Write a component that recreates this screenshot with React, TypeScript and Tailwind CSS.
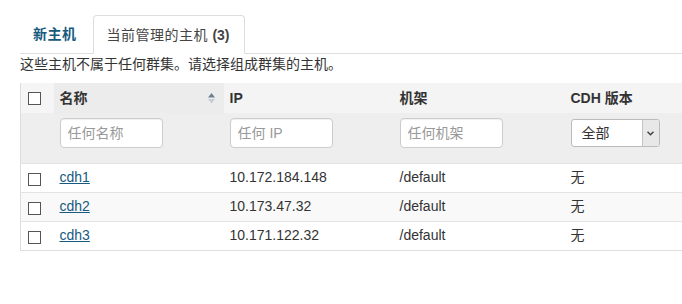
import React from "react";

const hosts = [
  { name: "cdh1", ip: "10.172.184.148", rack: "/default", cdh: "无" },
  { name: "cdh2", ip: "10.173.47.32", rack: "/default", cdh: "无" },
  { name: "cdh3", ip: "10.171.122.32", rack: "/default", cdh: "无" },
];

function Box() {
  return <span className="block w-[13px] h-[13px] border border-[#555] bg-white" />;
}

function SortIcon() {
  return (
    <svg width="7" height="11" viewBox="0 0 7 11" className="block">
      <path d="M3.5 0 L7 4.5 L0 4.5 Z" fill="#6f7f8f" />
      <path d="M0 6 L7 6 L3.5 10.5 Z" fill="#c5ccd3" />
    </svg>
  );
}

function Filter({ placeholder }: { placeholder: string }) {
  return (
    <input
      placeholder={placeholder}
      className="block w-[103px] h-[30px] px-[7px] border border-[#cccccc] rounded-[4px] bg-white text-[14px] text-[#333] placeholder:text-[#999] shadow-[inset_0_1px_1px_rgba(0,0,0,0.06)] outline-none"
    />
  );
}

export default function App() {
  return (
    <div
      className="w-[682px] h-[304px] overflow-hidden bg-white text-[14px] text-[#333] pt-[15px]"
      style={{ fontFamily: '"Liberation Sans", "Noto Sans CJK SC", sans-serif' }}
    >
      {/* tabs */}
      <div className="ml-[20px] flex items-end border-b border-[#dddddd] w-[700px]">
        <div className="mr-[2px] pl-[13px] pr-[14px] h-[38px] flex items-center font-bold text-[#175a80] leading-[20px] tracking-[0.5px]">
          新主机
        </div>
        <div className="-mb-px w-[152px] pl-[13px] h-[39px] flex items-center border border-[#dddddd] border-b-white rounded-t-[4px] bg-white leading-[20px] text-[#444] tracking-[0.5px]">
          当前管理的主机&nbsp;<span className="font-bold tracking-normal">(3)</span>
        </div>
      </div>

      <p className="ml-[20px] leading-[20px] mt-0">这些主机不属于任何群集。请选择组成群集的主机。</p>

      {/* table */}
      <table className="ml-[20px] mt-[9px] w-[700px] border-collapse table-fixed border-l border-b border-[#dddddd]">
        <colgroup>
          <col className="w-[33px]" />
          <col className="w-[170px]" />
          <col className="w-[170px]" />
          <col className="w-[171px]" />
          <col />
        </colgroup>
        <thead>
          <tr className="h-[30px] bg-[#f4f4f4] font-bold text-left">
            <th className="bg-[#f5f5f5] pl-[7px] align-middle">
              <Box />
            </th>
            <th className="bg-[#ececec] px-[6px] align-middle">
              <div className="flex items-center justify-between pr-[3px]">
                <span>名称</span>
                <SortIcon />
              </div>
            </th>
            <th className="px-[6px] align-middle">IP</th>
            <th className="px-[6px] align-middle">机架</th>
            <th className="px-[6px] align-middle">CDH 版本</th>
          </tr>
          <tr className="h-[50px] bg-[#eeeeee]">
            <td />
            <td className="px-[6px] pt-[5px] align-top">
              <Filter placeholder="任何名称" />
            </td>
            <td className="px-[6px] pt-[5px] align-top">
              <Filter placeholder="任何 IP" />
            </td>
            <td className="px-[6px] pt-[5px] align-top">
              <Filter placeholder="任何机架" />
            </td>
            <td className="px-[6px] pt-[6px] align-top">
              <div className="flex w-[89px] h-[28px] border border-[#bbbbbb] rounded-[3px] bg-white overflow-hidden">
                <span className="flex-1 pl-[10px] leading-[26px]">全部</span>
                <span className="w-[17px] bg-[#e8e8e8] border-l border-[#c4c4c4] flex items-center justify-center">
                  <svg width="7" height="5" viewBox="0 0 7 5">
                    <path d="M0.5 0.8 L3.5 3.8 L6.5 0.8" stroke="#444" strokeWidth="1.5" fill="none" />
                  </svg>
                </span>
              </div>
            </td>
          </tr>
        </thead>
        <tbody>
          {hosts.map((h, i) => (
            <tr
              key={h.name}
              className={`h-[29px] border-t border-[#e3e3e3] ${i % 2 === 1 ? "bg-[#f9f9f9]" : "bg-white"}`}
            >
              <td className="pl-[7px] pt-[4px] align-middle">
                <Box />
              </td>
              <td className="px-[6px] align-middle">
                <a className="text-[#175a80] underline">{h.name}</a>
              </td>
              <td className="px-[6px] align-middle">{h.ip}</td>
              <td className="px-[6px] align-middle">{h.rack}</td>
              <td className="px-[6px] align-middle">{h.cdh}</td>
            </tr>
          ))}
        </tbody>
      </table>
    </div>
  );
}
